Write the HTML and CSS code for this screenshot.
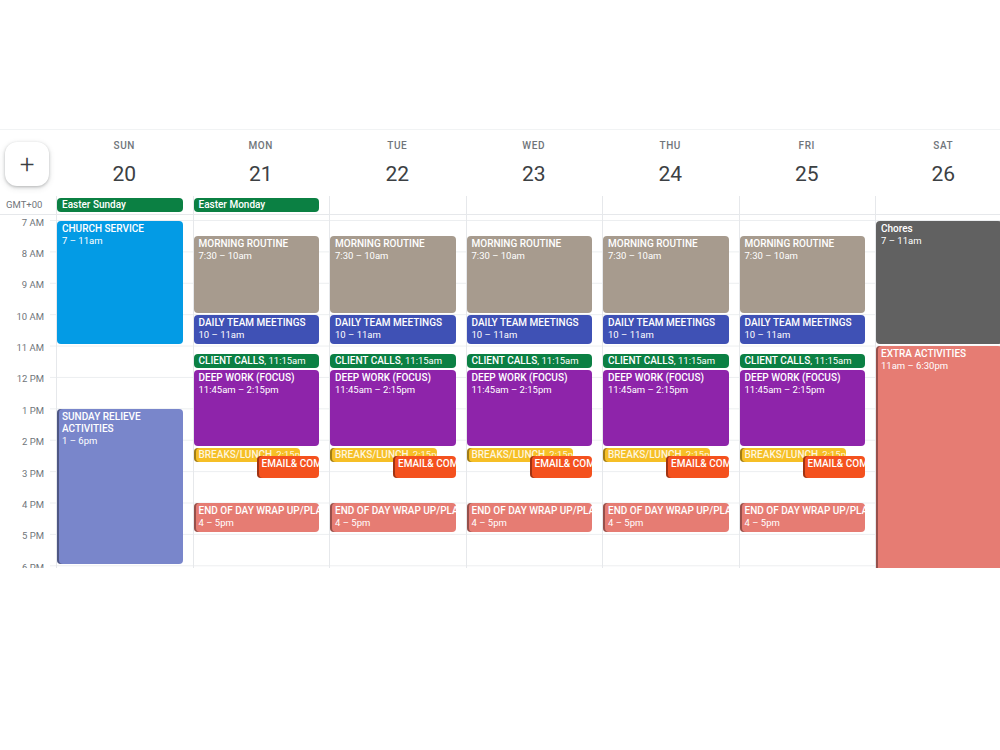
FILE: index.html
```html
<!DOCTYPE html>
<html lang="en">
<head>
  <meta charset="UTF-8">
  <meta name="viewport" content="width=device-width, initial-scale=1.0">
  <title>Week of 20 April</title>
  <link rel="stylesheet" href="styles.css">
</head>
<body>
  <div class="cal">
    <div class="cal-head">
      <div class="corner"><button class="new-btn">+</button></div>
      <div class="day"><span class="dow">SUN</span><span class="dnum">20</span></div>
      <div class="day"><span class="dow">MON</span><span class="dnum">21</span></div>
      <div class="day"><span class="dow">TUE</span><span class="dnum">22</span></div>
      <div class="day"><span class="dow">WED</span><span class="dnum">23</span></div>
      <div class="day"><span class="dow">THU</span><span class="dnum">24</span></div>
      <div class="day"><span class="dow">FRI</span><span class="dnum">25</span></div>
      <div class="day"><span class="dow">SAT</span><span class="dnum">26</span></div>
    </div>

    <div class="cal-allday">
      <div class="tz">GMT+00</div>
      <div class="ad-cell"><span class="chip">Easter Sunday</span></div>
      <div class="ad-cell"><span class="chip">Easter Monday</span></div>
      <div class="ad-cell"></div>
      <div class="ad-cell"></div>
      <div class="ad-cell"></div>
      <div class="ad-cell"></div>
      <div class="ad-cell"></div>
    </div>

    <div class="cal-body" id="grid">
      <div class="times">
        <div class="tlabel">7 AM</div>
        <div class="tlabel">8 AM</div>
        <div class="tlabel">9 AM</div>
        <div class="tlabel">10 AM</div>
        <div class="tlabel">11 AM</div>
        <div class="tlabel">12 PM</div>
        <div class="tlabel">1 PM</div>
        <div class="tlabel">2 PM</div>
        <div class="tlabel">3 PM</div>
        <div class="tlabel">4 PM</div>
        <div class="tlabel">5 PM</div>
        <div class="tlabel">6 PM</div>
      </div>
    </div>
  </div>

  <script>
    // grid starts a little before 7am, one hour = 31.4px
    const HOUR = 31.4;
    const OFFSET = 5.5;

    const weekday = [
      { title: 'MORNING ROUTINE', time: '7:30 – 10am', s: 7.5, e: 10, c: 'birch' },
      { title: 'DAILY TEAM MEETINGS', time: '10 – 11am', s: 10, e: 11, c: 'blueberry' },
      { title: 'CLIENT CALLS', time: '11:15am', s: 11.25, e: 11.75, c: 'basil', short: true },
      { title: 'DEEP WORK (FOCUS)', time: '11:45am – 2:15pm', s: 11.75, e: 14.25, c: 'grape' },
      { title: 'BREAKS/LUNCH', time: '2:15pm', s: 14.25, e: 14.75, c: 'banana', short: true, edge: true, cls: 'ev-narrow' },
      { title: 'EMAIL& COMMUNICATION', time: '2:30pm', s: 14.5, e: 15.25, c: 'tangerine', short: true, edge: true, cls: 'ev-over' },
      { title: 'END OF DAY WRAP UP/PLANNING', time: '4 – 5pm', s: 16, e: 17, c: 'flamingo', edge: true }
    ];

    const week = [
      [
        { title: 'CHURCH SERVICE', time: '7 – 11am', s: 7, e: 11, c: 'peacock' },
        { title: 'SUNDAY RELIEVE ACTIVITIES', time: '1 – 6pm', s: 13, e: 18, c: 'lavender', edge: true, cls: 'ev-wrap' }
      ],
      weekday, weekday, weekday, weekday, weekday,
      [
        { title: 'Chores', time: '7 – 11am', s: 7, e: 11, c: 'graphite' },
        { title: 'EXTRA ACTIVITIES', time: '11am – 6:30pm', s: 11, e: 18.5, c: 'flamingo', edge: true }
      ]
    ];

    const grid = document.getElementById('grid');

    week.forEach(events => {
      const col = document.createElement('div');
      col.className = 'col';
      events.forEach(ev => {
        const el = document.createElement('div');
        el.className = 'ev ev-' + ev.c + (ev.edge ? ' ev-edge' : '') + (ev.cls ? ' ' + ev.cls : '');
        el.style.top = (OFFSET + (ev.s - 7) * HOUR) + 'px';
        el.style.height = ((ev.e - ev.s) * HOUR - 2) + 'px';
        if (ev.short) {
          el.classList.add('ev-short');
          el.innerHTML = `<div class="ev-line"><span class="ev-title">${ev.title}</span>, ${ev.time}</div>`;
        } else {
          el.innerHTML = `<div class="ev-title">${ev.title}</div><div class="ev-time">${ev.time}</div>`;
        }
        col.appendChild(el);
      });
      grid.appendChild(col);
    });
  </script>
</body>
</html>
```

FILE: styles.css
```css
body {
  margin: 0;
  background: #ffffff;
  font-family: Roboto, "Liberation Sans", Arial, sans-serif;
  color: #3c4043;
  width: 1000px;
  height: 750px;
  overflow: hidden;
}
.cal {
  margin-top: 129px;
  border-top: 1px solid #f1f3f4;
  width: 1012px;
}

/* header with day names */
.cal-head,
.cal-allday,
.cal-body {
  display: grid;
  grid-template-columns: 56px repeat(7, 136.5px);
}
.cal-head {
  height: 66px;
}
.corner {
  padding: 12px 0 0 5px;
}
.new-btn {
  width: 44px;
  height: 44px;
  border: none;
  border-radius: 12px;
  background: #ffffff;
  box-shadow: 0 1px 3px rgba(60, 64, 67, 0.3), 0 2px 6px rgba(60, 64, 67, 0.15);
  font-family: Roboto, sans-serif;
  font-size: 26px;
  font-weight: 300;
  line-height: 44px;
  color: #3c4043;
  padding: 0;
}
.day {
  display: flex;
  flex-direction: column;
  align-items: center;
  padding-top: 10px;
}
.dow {
  font-size: 10px;
  line-height: 12px;
  letter-spacing: 0.6px;
  color: #70757a;
  font-weight: 500;
}
.dnum {
  margin-top: 9px;
  font-size: 21px;
  line-height: 26px;
  color: #3c4043;
}

/* all day row */
.cal-allday {
  height: 18px;
  border-bottom: 1px solid #e6e8eb;
}
.tz {
  font-size: 9.5px;
  line-height: 18px;
  color: #70757a;
  padding-left: 6px;
}
.ad-cell {
  border-left: 1px solid #e6e8eb;
  padding: 2px 10px 0 0;
}
.chip {
  display: block;
  height: 14px;
  line-height: 14px;
  border-radius: 4px;
  background: #0b8043;
  color: #ffffff;
  font-size: 10px;
  font-weight: 500;
  padding-left: 5px;
}

/* timed grid */
.cal-body {
  height: 353px;
  overflow: hidden;
  background-image: linear-gradient(#eceef0 1px, transparent 1px);
  background-size: 100% 31.4px;
  background-position: 0 5px;
}
.times {
  background: linear-gradient(to right, #ffffff 50px, transparent 50px);
  padding-top: 0.5px;
}
.tlabel {
  height: 31.4px;
  font-size: 9.5px;
  line-height: 14px;
  color: #70757a;
  text-align: right;
  padding-right: 12px;
  box-sizing: border-box;
}
.col {
  position: relative;
  border-left: 1px solid #e6e8eb;
}

/* events */
.ev {
  position: absolute;
  left: 0;
  right: 10px;
  border-radius: 4px;
  padding: 2px 4px 0 5px;
  color: #ffffff;
  font-size: 9.5px;
  line-height: 12px;
  overflow: hidden;
  white-space: nowrap;
  box-sizing: border-box;
}
.ev-title {
  font-weight: 500;
  font-size: 10px;
}
.ev-wrap {
  white-space: normal;
}
.ev-short {
  padding-top: 0;
  line-height: 14px;
}
.ev-edge {
  box-shadow: inset 2px 0 0 rgba(0, 0, 0, 0.35);
}
.ev-narrow {
  right: 29px;
}
.ev-over {
  left: 63px;
  padding-top: 1px;
}
.ev-peacock { background: #039be5; }
.ev-lavender { background: #7986cb; }
.ev-birch { background: #a79b8e; }
.ev-blueberry { background: #3f51b5; }
.ev-basil { background: #0b8043; }
.ev-grape { background: #8e24aa; }
.ev-banana { background: #f6bf26; color: rgba(255, 255, 255, 0.85); }
.ev-tangerine { background: #f4511e; }
.ev-flamingo { background: #e67c73; }
.ev-graphite { background: #616161; }
```
